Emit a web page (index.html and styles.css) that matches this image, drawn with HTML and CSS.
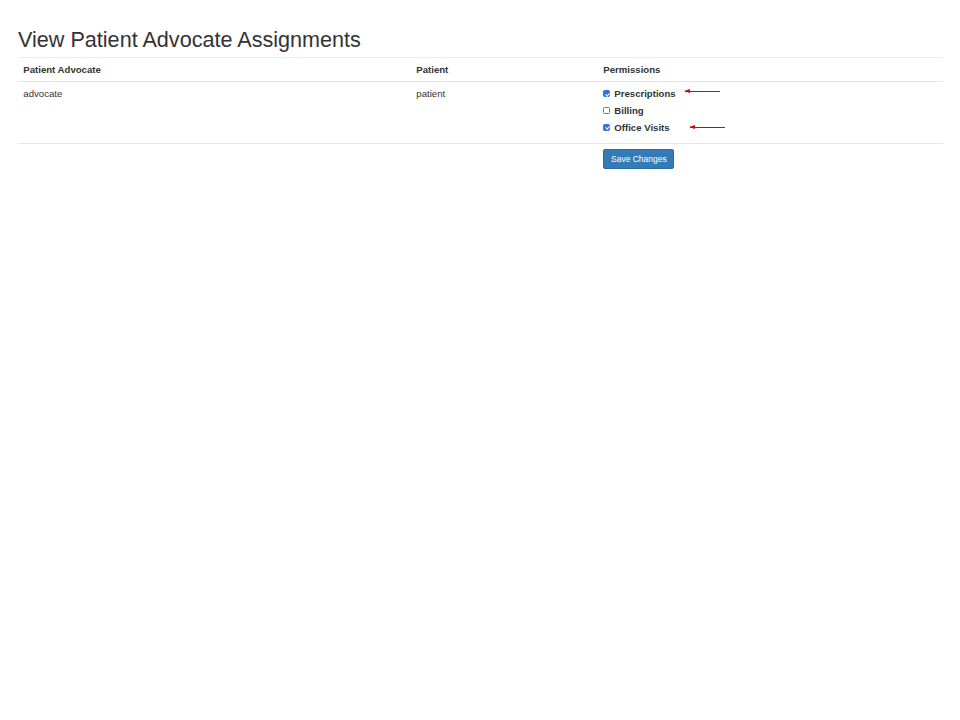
FILE: index.html
```html
<!DOCTYPE html>
<html>
<head>
<meta charset="utf-8">
<link rel="stylesheet" href="styles.css">
</head>
<body>
<div class="page">
  <h2 class="title">View Patient Advocate Assignments</h2>
  <table class="assign">
    <colgroup>
      <col class="c1"><col class="c2"><col class="c3">
    </colgroup>
    <thead>
      <tr><th>Patient Advocate</th><th>Patient</th><th>Permissions</th></tr>
    </thead>
    <tbody>
      <tr>
        <td>advocate</td>
        <td>patient</td>
        <td>
          <div class="check"><label><input type="checkbox" checked> Prescriptions</label><span class="arrow a1"></span></div>
          <div class="check"><label><input type="checkbox"> Billing</label></div>
          <div class="check"><label><input type="checkbox" checked> Office Visits</label><span class="arrow a2"></span></div>
        </td>
      </tr>
      <tr class="actions">
        <td></td><td></td>
        <td><button class="btn">Save Changes</button></td>
      </tr>
    </tbody>
  </table>
</div>
</body>
</html>
```
FILE: styles.css
```css
html, body { margin: 0; padding: 0; background: #fff; }
body {
  font-family: "Liberation Sans", Arial, sans-serif;
  font-size: 9.6px;
  line-height: 13.33px;
  color: #333;
}
.page { padding: 16px 17px 0 18px; }
.title {
  font-family: "Liberation Sans", Arial, sans-serif;
  font-weight: 400;
  font-size: 21.6px;
  line-height: 22px;
  margin: 13px 0 6px;
  color: #333;
}
.assign {
  width: 100%;
  border-collapse: collapse;
  table-layout: fixed;
}
.c1 { width: 393px; }
.c2 { width: 187px; }
.assign th, .assign td {
  text-align: left;
  vertical-align: top;
  padding: 5.33px;
  border-top: 1px solid #e6e6e6;
}
.assign th {
  font-weight: 700;
  padding-top: 5px;
  padding-bottom: 5px;
  border-bottom: 1px solid #e6e6e6;
}
.assign thead tr th { border-top: 1px solid #ededed; }
.assign tbody tr:first-child td { padding-top: 5px; }
.check {
  position: relative;
  line-height: 13.33px;
  min-height: 13.33px;
  margin: 0 0 3.6px;
}
.check label { font-weight: 700; padding-left: 11px; position: relative; display: inline-block; }
.check input {
  -webkit-appearance: none;
  appearance: none;
  position: absolute;
  left: 0;
  top: 3px;
  width: 7px;
  height: 7px;
  margin: 0;
  box-sizing: border-box;
  border: 1px solid #767676;
  border-radius: 1.5px;
  background: #fff;
}
.check input:checked {
  background: #2f74e0;
  border-color: #2f74e0;
}
.check input:checked::after {
  content: "";
  position: absolute;
  left: 1.6px;
  top: 0.2px;
  width: 1.6px;
  height: 3.2px;
  border: solid #fff;
  border-width: 0 1px 1px 0;
  transform: rotate(40deg);
}
.actions td { padding-top: 5px; }
.btn {
  font-family: "Liberation Sans", Arial, sans-serif;
  font-size: 8.5px;
  line-height: 12px;
  padding: 3px 6.67px;
  color: #fff;
  background: #337ab7;
  border: 1px solid #2e6da4;
  border-radius: 2px;
  cursor: pointer;
}
.arrow {
  position: absolute;
  height: 1px;
  width: 35px;
  background: #e00000;
}
.arrow::before {
  content: "";
  position: absolute;
  left: -1px;
  top: -2px;
  border-right: 6px solid #e00000;
  border-top: 2.5px solid transparent;
  border-bottom: 2.5px solid transparent;
}
.a1 { left: 82px; top: 4px; }
.a2 { left: 87px; top: 6px; }
```
